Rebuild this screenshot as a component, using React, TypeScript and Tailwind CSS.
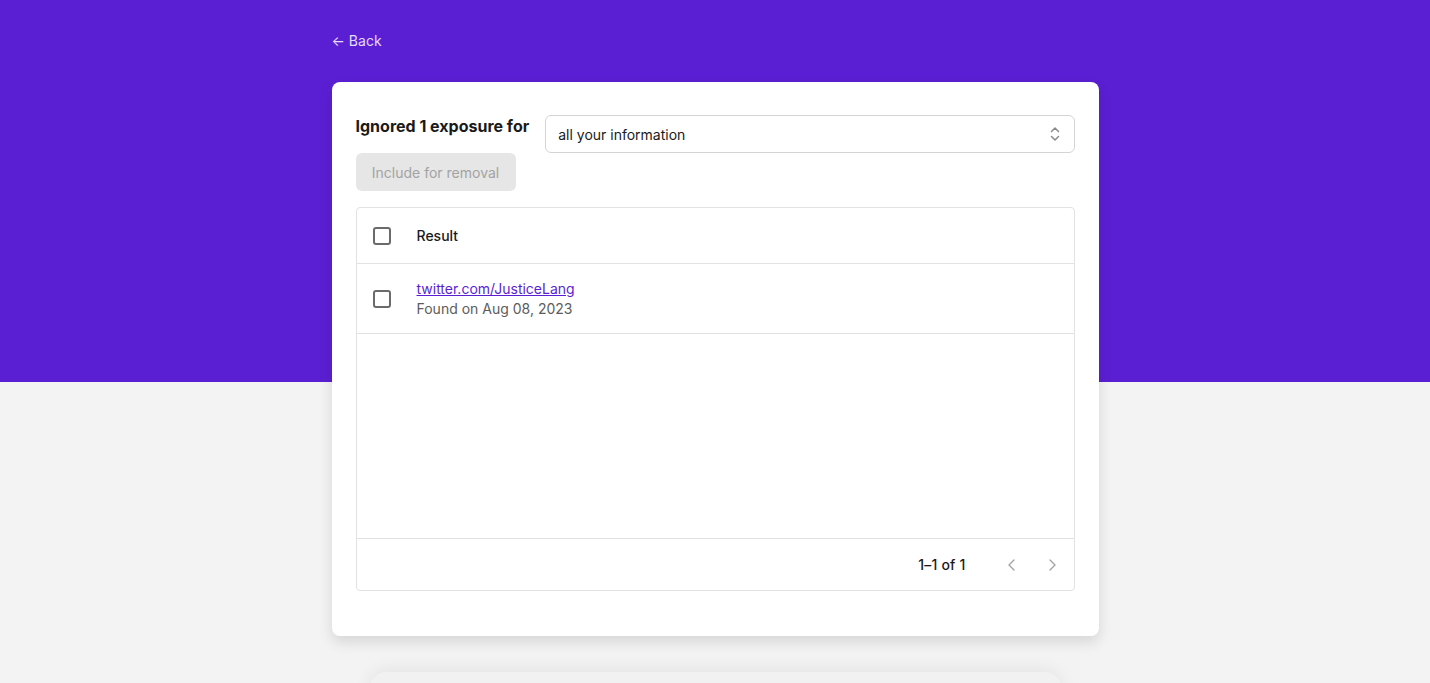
import React from 'react';

const Checkbox: React.FC = () => (
  <span className="block w-[18px] h-[18px] rounded-[3px] border-2 border-[#6b6b6b] bg-white" />
);

const App: React.FC = () => {
  return (
    <div className="h-[683px] bg-[#f3f3f3] relative overflow-hidden" style={{ fontFamily: 'Inter, "Noto Sans", sans-serif' }}>
      <div className="absolute inset-x-0 top-0 h-[382px] bg-[#5b1fd3]" />
      <div className="relative w-[767px] mx-auto pt-[32px]">
        <a href="#" className="flex w-fit items-center gap-1 text-[14px] text-[#e4dbfa] leading-[18px]">
          <span className="text-[14px]">←</span> Back
        </a>

        <div className="mt-[32px] bg-white rounded-lg shadow-[0_6px_14px_rgba(0,0,0,0.12)] px-6 pt-[33px] pb-[45px]">
          <div className="flex gap-4">
            <div className="flex flex-col gap-[15px] shrink-0">
              <h1 className="text-[16px] font-bold text-[#1a1a1a] leading-6 -mt-[1px]">Ignored 1 exposure for</h1>
              <button className="w-[160px] h-[38px] rounded-md bg-[#e6e6e6] text-[14px] text-[#a3a3a3]">
                Include for removal
              </button>
            </div>
            <div className="flex-1 h-[38px] border border-[#d4d4d4] rounded-md flex items-center justify-between pl-3 pr-[14px]">
              <span className="text-[14px] text-[#1a1a1a]">all your information</span>
              <svg width="10" height="16" viewBox="0 0 10 16" fill="none" stroke="#8a8a8a" strokeWidth="1.5" strokeLinecap="round" strokeLinejoin="round">
                <path d="M1.5 5.5 5 2l3.5 3.5" />
                <path d="M1.5 10.5 5 14l3.5-3.5" />
              </svg>
            </div>
          </div>

          <div className="mt-4 border border-[#e2e2e2] rounded flex flex-col h-[384px]">
            <div className="flex items-center h-[56px] border-b border-[#e2e2e2] pl-4">
              <Checkbox />
              <span className="ml-[26px] text-[14px] font-medium text-[#1a1a1a]">Result</span>
            </div>
            <div className="flex items-center h-[70px] border-b border-[#e2e2e2] pl-4">
              <Checkbox />
              <div className="ml-[26px] flex flex-col text-[14px] leading-5">
                <a href="#" className="text-[#5b1fd3] underline">twitter.com/JusticeLang</a>
                <span className="text-[#5c5c5c]">Found on Aug 08, 2023</span>
              </div>
            </div>
            <div className="flex-1" />
            <div className="h-[52px] border-t border-[#e2e2e2] flex items-center justify-end pr-[14px]">
              <span className="text-[14px] font-medium text-[#1a1a1a] tracking-[0.2px]">1–1 of 1</span>
              <svg className="ml-[38px]" width="16" height="16" viewBox="0 0 16 16" fill="none" stroke="#a3a3a3" strokeWidth="1.4" strokeLinecap="round" strokeLinejoin="round">
                <path d="M10 3 5 8l5 5" />
              </svg>
              <svg className="ml-[24px]" width="16" height="16" viewBox="0 0 16 16" fill="none" stroke="#a3a3a3" strokeWidth="1.4" strokeLinecap="round" strokeLinejoin="round">
                <path d="m6 3 5 5-5 5" />
              </svg>
            </div>
          </div>
        </div>

        <div className="mt-[36px] mx-[38px] h-[60px] rounded-2xl bg-[#f1f1f1] shadow-[0_-2px_18px_rgba(0,0,0,0.07)]" />
      </div>
    </div>
  );
};

export default App;
